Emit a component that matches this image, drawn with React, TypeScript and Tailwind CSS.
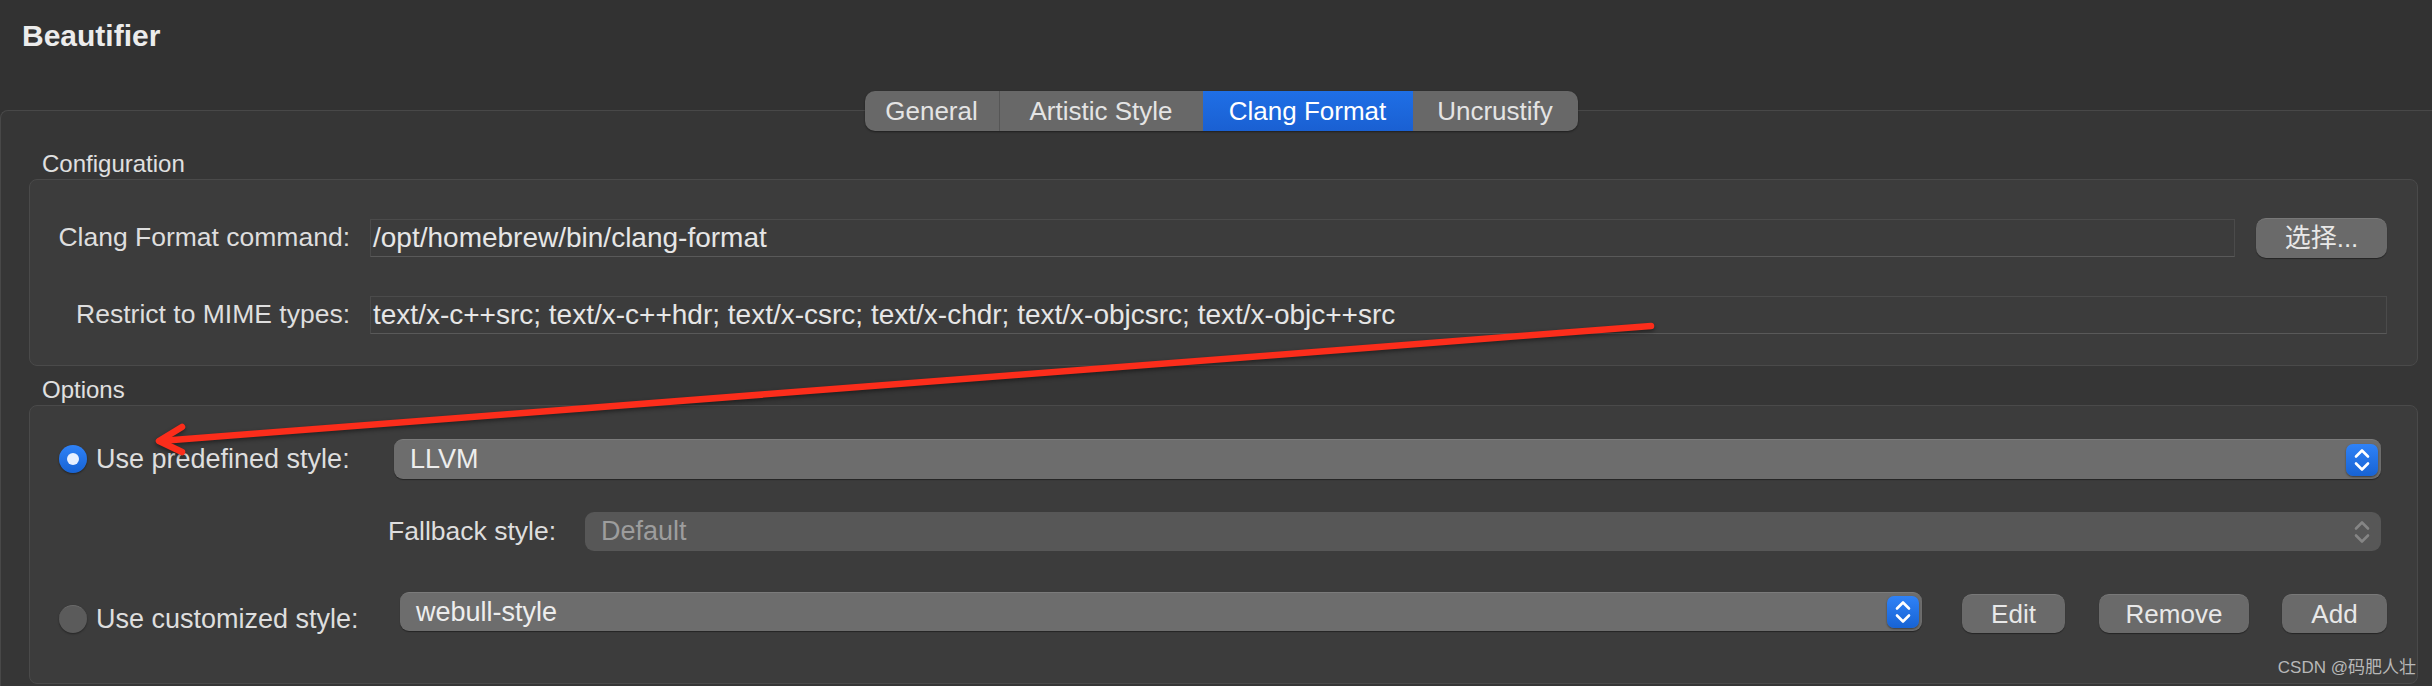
import React from 'react';

const tabs = [
  { label: 'General', w: 'w-[134px]' },
  { label: 'Artistic Style', w: 'w-[204px]' },
  { label: 'Clang Format', w: 'w-[210px]', active: true },
  { label: 'Uncrustify', w: 'w-[165px]' },
];

function Stepper({ disabled }: { disabled?: boolean }) {
  return (
    <div
      className={
        disabled
          ? 'w-[32px] h-[32px] flex items-center justify-center'
          : 'w-[32px] h-[32px] rounded-[7px] bg-linear-to-b from-[#2f82f7] to-[#1763d4] shadow-[0_1px_2px_rgba(0,0,0,0.45)] flex items-center justify-center'
      }
    >
      <svg
        width="32"
        height="32"
        viewBox="0 0 32 32"
        fill="none"
        stroke={disabled ? '#858585' : '#ffffff'}
        strokeWidth="2.6"
        strokeLinecap="round"
        strokeLinejoin="round"
      >
        <path d="M10 12.5 L16 6.5 L22 12.5" />
        <path d="M10 19.5 L16 25.5 L22 19.5" />
      </svg>
    </div>
  );
}

function Popup({ value, disabled, className = '' }: { value: string; disabled?: boolean; className?: string }) {
  return (
    <div
      className={`rounded-[9px] flex items-center pl-[16px] pr-[3px] ${
        disabled
          ? 'bg-[#575757] text-[#9d9d9d]'
          : 'bg-[#6d6d6d] text-[#ededed] border-t border-[#7b7b7b] shadow-[0_1px_1px_rgba(0,0,0,0.4)]'
      } ${className}`}
    >
      <span className="flex-1 text-[27px] leading-none">{value}</span>
      <Stepper disabled={disabled} />
    </div>
  );
}

function Button({ label, className = '' }: { label: string; className?: string }) {
  return (
    <div
      className={`h-[39px] rounded-[10px] bg-[#6a6a6a] border-t border-[#787878] shadow-[0_1px_1px_rgba(0,0,0,0.4)] flex items-center justify-center text-[26px] text-[#e8e8e8] ${className}`}
    >
      {label}
    </div>
  );
}

function Radio({ checked }: { checked?: boolean }) {
  return checked ? (
    <div className="w-[28px] h-[28px] shrink-0 rounded-full bg-linear-to-b from-[#2f82f7] to-[#1763d4] shadow-[0_1px_2px_rgba(0,0,0,0.45)] flex items-center justify-center">
      <div className="w-[12px] h-[12px] rounded-full bg-[#e8f0ff]" />
    </div>
  ) : (
    <div className="w-[28px] h-[28px] shrink-0 rounded-full bg-[#5b5b5b] border-t border-[#6a6a6a] shadow-[0_1px_2px_rgba(0,0,0,0.4)]" />
  );
}

function Field({ value, className = '' }: { value: string; className?: string }) {
  return (
    <div
      className={`h-[38px] flex items-center pl-[2px] bg-[#3c3c3c] border border-[#4b4b4b] border-b-[#595959] text-[28px] text-[#e6e6e6] whitespace-nowrap overflow-hidden ${className}`}
    >
      {value}
    </div>
  );
}

export default function App() {
  return (
    <div className="relative w-[2432px] h-[686px] overflow-hidden bg-[#323232] font-['Liberation_Sans','Noto_Sans_CJK_SC',sans-serif] text-[#dedede]">
      <div className="h-[110px] pl-[22px] pt-[16px]">
        <h1 className="text-[30px] font-bold text-[#ececec] leading-[40px]">Beautifier</h1>
      </div>

      <div className="h-[576px] border-t border-l border-[#484848] rounded-tl-[8px] bg-[#363636]">
        <div className="-mt-[20px] flex justify-center pl-[9px]">
          <div className="flex h-[40px] rounded-[10px] overflow-hidden bg-[#686868] shadow-[0_1px_2px_rgba(0,0,0,0.45)]">
            {tabs.map((t, i) => (
              <div
                key={t.label}
                className={`${t.w} flex items-center justify-center text-[26px] ${
                  t.active
                    ? 'bg-linear-to-b from-[#1f6fe6] to-[#1a60d2] text-white'
                    : 'text-[#e4e4e4]'
                } ${i === 1 ? 'border-l border-[#565656]' : ''}`}
              >
                {t.label}
              </div>
            ))}
          </div>
        </div>

        <div className="mt-[19px] ml-[41px] h-[28px] leading-[28px] text-[24px] text-[#e0e0e0]">Configuration</div>

        <div className="mt-[1px] ml-[28px] mr-[14px] h-[187px] rounded-[8px] border border-[#4a4a4a] bg-[#3c3c3c]">
          <div className="mt-[38px] h-[40px] flex items-center">
            <div className="w-[320px] text-right text-[26.5px]">Clang Format command:</div>
            <Field value="/opt/homebrew/bin/clang-format" className="ml-[20px] flex-1" />
            <Button label="选择..." className="ml-[21px] mr-[30px] w-[131px] h-[40px]" />
          </div>
          <div className="mt-[37px] h-[40px] flex items-center">
            <div className="w-[320px] text-right text-[26.5px]">Restrict to MIME types:</div>
            <Field
              value="text/x-c++src; text/x-c++hdr; text/x-csrc; text/x-chdr; text/x-objcsrc; text/x-objc++src"
              className="ml-[20px] mr-[30px] flex-1 h-[37px]"
            />
          </div>
        </div>

        <div className="mt-[10px] ml-[41px] h-[28px] leading-[28px] text-[24px] text-[#e0e0e0]">Options</div>

        <div className="mt-[1px] ml-[28px] mr-[14px] h-[279px] rounded-[8px] border border-[#4a4a4a] bg-[#3c3c3c]">
          <div className="mt-[33px] h-[40px] flex items-center pl-[29px] pr-[36px]">
            <Radio checked />
            <div className="ml-[9px] w-[298px] text-[27px] leading-none">Use predefined style:</div>
            <Popup value="LLVM" className="flex-1 h-[40px]" />
          </div>
          <div className="mt-[33px] h-[39px] flex items-center pr-[36px]">
            <div className="w-[526px] text-right text-[26.5px] leading-none">Fallback style:</div>
            <Popup value="Default" disabled className="ml-[29px] flex-1 h-[39px]" />
          </div>
          <div className="mt-[41px] h-[41px] flex items-start pl-[29px] pr-[30px]">
            <div className="mt-[13px] flex items-center">
              <Radio />
              <div className="ml-[9px] w-[304px] text-[27px] leading-none">Use customized style:</div>
            </div>
            <Popup value="webull-style" className="flex-1 h-[39px]" />
            <Button label="Edit" className="ml-[40px] mt-[2px] w-[103px]" />
            <Button label="Remove" className="ml-[34px] mt-[2px] w-[150px]" />
            <Button label="Add" className="ml-[33px] mt-[2px] w-[105px]" />
          </div>
        </div>
      </div>

      <div className="absolute right-[16px] bottom-[10px] text-[17px] leading-none text-[#b8b8b8]">CSDN @码肥人壮</div>

      <svg
        className="absolute inset-0 pointer-events-none drop-shadow-[0_2px_2px_rgba(0,0,0,0.45)]"
        width="2432"
        height="686"
        viewBox="0 0 2432 686"
        fill="none"
        stroke="#fb2d1b"
        strokeWidth="6.5"
        strokeLinecap="round"
        strokeLinejoin="round"
      >
        <path d="M1651 326 L160 441" />
        <path d="M182 427 L159 441 L182 452" />
      </svg>
    </div>
  );
}
